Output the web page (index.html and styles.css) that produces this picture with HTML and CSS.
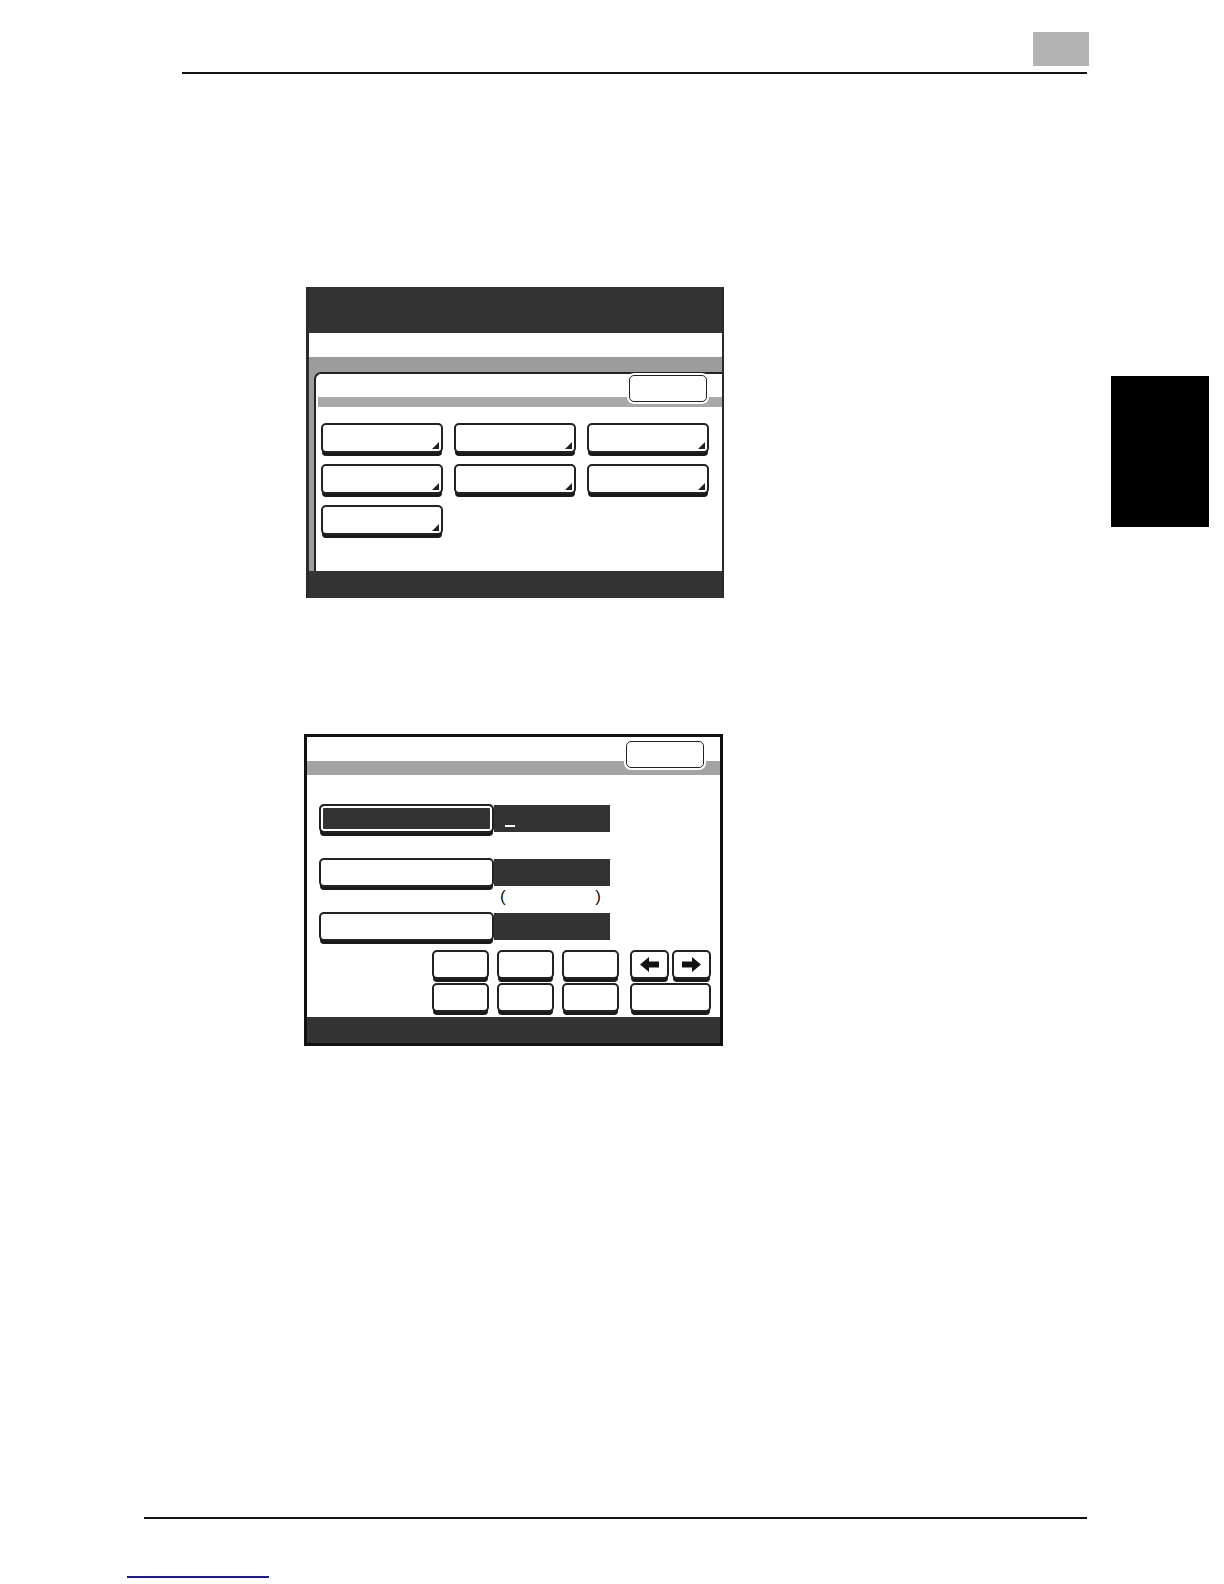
FILE: index.html
```html
<!DOCTYPE html>
<html lang="en">
<head>
<meta charset="utf-8">
<title>Screen</title>
<link rel="stylesheet" href="styles.css">
</head>
<body>
<div class="page">
  <header class="head">
    <div class="head-box"></div>
  </header>
  <div class="rule rule-top"></div>

  <div class="side-tab"></div>

  <section class="screen1">
    <div class="s1-title"></div>
    <div class="s1-white"></div>
    <div class="s1-grey">
      <div class="s1-panel">
        <div class="s1-panel-head">
          <div class="btn btn-small"></div>
        </div>
        <div class="s1-grid">
          <div class="btn btn-menu"></div>
          <div class="btn btn-menu"></div>
          <div class="btn btn-menu"></div>
          <div class="btn btn-menu"></div>
          <div class="btn btn-menu"></div>
          <div class="btn btn-menu"></div>
          <div class="btn btn-menu"></div>
        </div>
      </div>
    </div>
    <div class="s1-foot"></div>
  </section>

  <section class="screen2">
    <div class="s2-head">
      <div class="btn btn-small"></div>
    </div>
    <div class="s2-rows">
      <div class="s2-row">
        <div class="btn btn-field btn-selected"></div>
        <div class="field"><span class="cursor"></span></div>
      </div>
      <div class="s2-row row2">
        <div class="btn btn-field"></div>
        <div class="field"></div>
      </div>
      <div class="parens"><span>(</span><span>)</span></div>
      <div class="s2-row row3">
        <div class="btn btn-field"></div>
        <div class="field"></div>
      </div>
    </div>
    <div class="keypad">
      <div class="btn key"></div>
      <div class="btn key"></div>
      <div class="btn key"></div>
      <div class="arrows">
        <div class="btn key-arrow">
          <svg width="19" height="15" viewBox="0 0 19 15"><polygon points="0,7.5 9,0 9,4.5 19,4.5 19,10.5 9,10.5 9,15" fill="#111"/></svg>
        </div>
        <div class="btn key-arrow">
          <svg width="19" height="15" viewBox="0 0 19 15"><polygon points="19,7.5 10,0 10,4.5 0,4.5 0,10.5 10,10.5 10,15" fill="#111"/></svg>
        </div>
      </div>
      <div class="btn key"></div>
      <div class="btn key"></div>
      <div class="btn key"></div>
      <div class="btn key-wide"></div>
    </div>
    <div class="s2-foot"></div>
  </section>

  <div class="rule rule-bottom"></div>
  <div class="link-line"></div>
</div>
</body>
</html>
```

FILE: styles.css
```css
html, body {
  margin: 0;
  padding: 0;
  background: #ffffff;
  font-family: "Liberation Sans", Arial, sans-serif;
}

.page {
  position: relative;
  width: 1224px;
  height: 1584px;
  overflow: hidden;
}

.head {
  display: flex;
  justify-content: flex-end;
  padding-top: 32px;
  padding-right: 135px;
}

.head-box {
  width: 56px;
  height: 34px;
  background: #b3b3b3;
}

.rule {
  height: 2px;
  background: #111111;
}

.rule-top {
  margin: 6px 137px 0 182px;
}

.side-tab {
  position: absolute;
  left: 1111px;
  top: 376px;
  width: 98px;
  height: 151px;
  background: #000000;
}

/* ---------- screen 1 ---------- */
.screen1 {
  margin: 213px 0 0 306px;
  width: 418px;
  height: 311px;
  box-sizing: border-box;
  background: #333333;
  border-left: 3px solid #2a2a2a;
  border-right: 2px solid #2a2a2a;
  display: flex;
  flex-direction: column;
}

.s1-title {
  height: 46px;
  flex: none;
}

.s1-white {
  height: 24px;
  background: #ffffff;
  flex: none;
}

.s1-grey {
  flex: 1;
  background: #9c9c9c;
  padding: 15px 0 0 5px;
  display: flex;
}

.s1-panel {
  flex: 1;
  background: #ffffff;
  border-top: 2px solid #222222;
  border-left: 2px solid #222222;
  border-top-left-radius: 7px;
}

.s1-panel-head {
  height: 33px;
  box-sizing: border-box;
  display: flex;
  justify-content: flex-end;
  align-items: flex-start;
  padding: 1px 15px 0 0;
  background: linear-gradient(to bottom, transparent 23px, #a8a8a8 23px, #a8a8a8 33px) no-repeat 2px 0 / 100% 33px;
}

.s1-foot {
  height: 27px;
  flex: none;
}

.btn {
  position: relative;
  box-sizing: border-box;
  background: #ffffff;
  border: 2px solid #222222;
  border-radius: 5px;
  box-shadow: 0 4px 0 -1px #1a1a1a;
}

.btn-small {
  width: 78px;
  height: 27px;
  box-shadow: 0 0 0 2px #ffffff;
  border-width: 1.5px;
}

.s1-grid {
  display: grid;
  grid-template-columns: repeat(3, 122px);
  grid-auto-rows: 30px;
  column-gap: 11px;
  row-gap: 11px;
  margin: 16px 0 0 5px;
}

.btn-menu::after {
  content: "";
  position: absolute;
  right: 2px;
  bottom: 2px;
  width: 0;
  height: 0;
  border-style: solid;
  border-width: 0 0 7px 7px;
  border-color: transparent transparent #222222 transparent;
}

/* ---------- screen 2 ---------- */
.screen2 {
  margin: 136px 0 0 304px;
  width: 419px;
  height: 312px;
  box-sizing: border-box;
  border: 3px solid #111111;
  background: #ffffff;
  display: flex;
  flex-direction: column;
}

.s2-head {
  height: 38px;
  flex: none;
  box-sizing: border-box;
  display: flex;
  justify-content: flex-end;
  align-items: flex-start;
  padding: 4px 16px 0 0;
  background: linear-gradient(to bottom, transparent 24px, #a3a3a3 24px) no-repeat;
}

.s2-rows {
  margin: 29px 0 0 12px;
  display: flex;
  flex-direction: column;
}

.s2-row {
  display: flex;
  align-items: flex-start;
}

.row2 {
  margin-top: 25px;
}

.row3 {
  margin-top: 7px;
}

.btn-field {
  width: 175px;
  height: 29px;
}

.btn-selected {
  background: #333333;
  box-shadow: inset 0 0 0 2px #ffffff, 0 4px 0 -1px #1a1a1a;
}

.field {
  width: 116px;
  height: 27px;
  margin-top: 1px;
  background: #333333;
  position: relative;
}

.cursor {
  position: absolute;
  left: 11px;
  top: 20px;
  width: 10px;
  height: 2px;
  background: #ffffff;
}

.parens {
  display: flex;
  justify-content: space-between;
  width: 101px;
  height: 17px;
  margin: 1px 0 0 181px;
  font-size: 17px;
  line-height: 17px;
  color: #111111;
}

.keypad {
  margin: 9px 0 0 125px;
  display: grid;
  grid-template-columns: 57px 57px 57px 84px;
  grid-auto-rows: 29px;
  column-gap: 8px;
  row-gap: 4px;
}

.keypad .arrows {
  margin-left: 3px;
  display: flex;
  gap: 3px;
}

.key {
  height: 29px;
}

.key-wide {
  margin-left: 3px;
  height: 29px;
}

.key-arrow {
  flex: none;
  width: 39px;
  height: 29px;
  display: flex;
  align-items: center;
  justify-content: center;
}

.s2-foot {
  margin-top: auto;
  height: 26px;
  background: #333333;
}

/* ---------- footer ---------- */
.rule-bottom {
  margin: 471px 137px 0 144px;
}

.link-line {
  margin: 57px 0 0 127px;
  width: 142px;
  height: 2px;
  background: #1c1c8e;
}
```
